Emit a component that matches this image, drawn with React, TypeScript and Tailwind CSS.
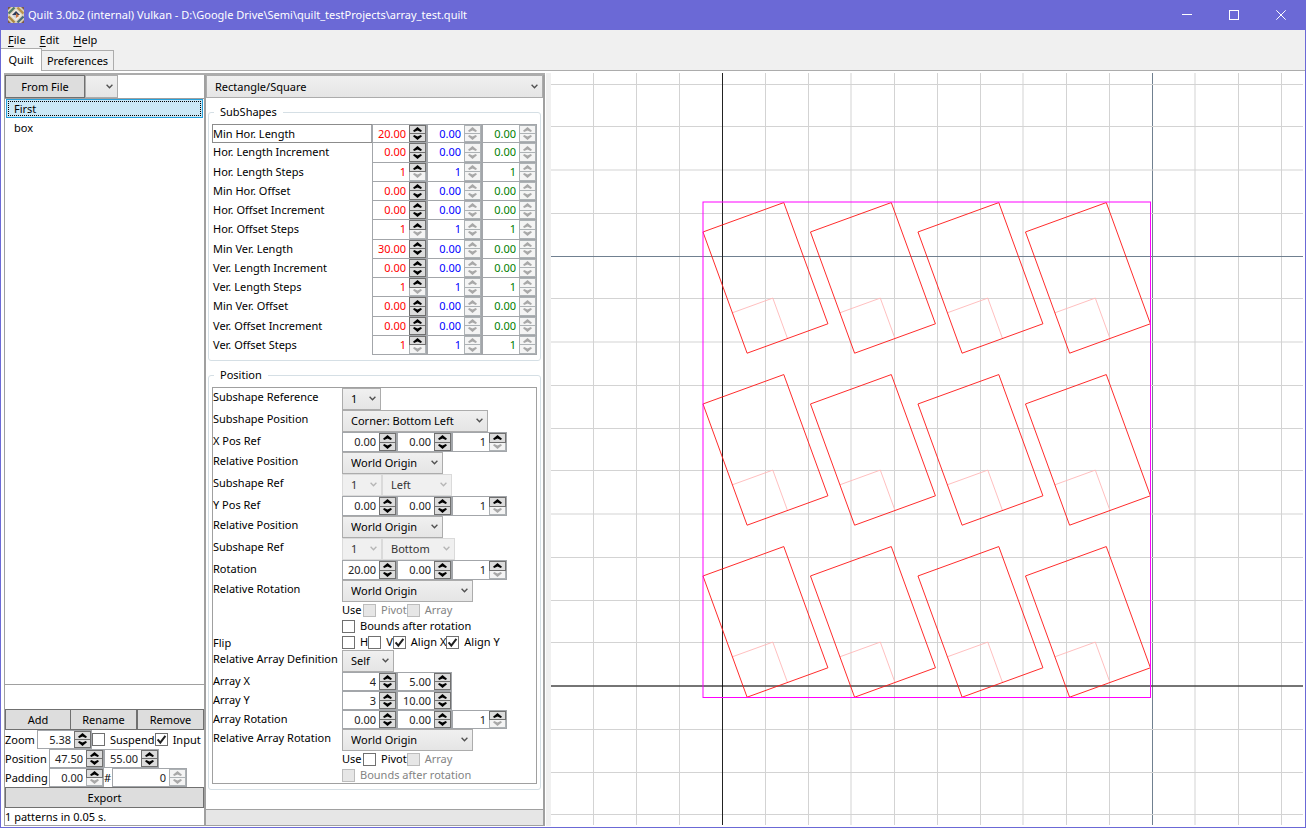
import { useState } from "react";
import type { ReactNode } from "react";

function Caret({ up, dim }: { up?: boolean; dim?: boolean }) {
  return (
    <svg width="9" height="5" viewBox="0 0 9 5" className={dim ? "text-[#a8a8a8]" : "text-black"}>
      <path
        d={up ? "M4.5 0 L9 3.8 L7.8 5 L4.5 3.6 L1.2 5 L0 3.8 Z" : "M4.5 5 L9 1.2 L7.8 0 L4.5 1.4 L1.2 0 L0 1.2 Z"}
        fill="currentColor"
      />
    </svg>
  );
}

type SpinProps = {
  label: string;
  value: number;
  digits?: number;
  min?: number;
  off?: boolean;
  color?: string;
  width?: string;
};

function Spin({ label, value, digits = 2, min, off, color = "text-[#222]", width = "w-[55px]" }: SpinProps) {
  const [n, setN] = useState(value);
  const downOff = off || (min !== undefined && n <= min);
  const live = "bg-[#dcdcdc] border-[#707070]";
  const dim = "bg-[#f4f4f4] border-[#adb2b5]";
  return (
    <span className={`flex h-full shrink-0 border border-[#a3a6aa] bg-white ${width}`}>
      <input
        aria-label={label}
        value={n.toFixed(digits)}
        readOnly
        className={`min-w-0 flex-1 bg-transparent pr-[3px] text-right outline-none ${color}`}
      />
      <span className="flex w-[17px] shrink-0 flex-col">
        <button
          aria-label={`Increase ${label}`}
          disabled={off}
          onClick={() => setN(n + 1)}
          className={`flex min-h-0 flex-1 items-center justify-center border ${off ? dim : live}`}
        >
          <Caret up dim={off} />
        </button>
        <button
          aria-label={`Decrease ${label}`}
          disabled={downOff}
          onClick={() => setN(n - 1)}
          className={`flex min-h-0 flex-1 items-center justify-center border border-t-0 ${downOff ? dim : live}`}
        >
          <Caret dim={downOff} />
        </button>
      </span>
    </span>
  );
}

function Combo({ label, options, width, off }: { label: string; options: string[]; width: string; off?: boolean }) {
  return (
    <span className={`relative flex h-full shrink-0 ${width}`}>
      <select
        aria-label={label}
        disabled={off}
        className={`w-full appearance-none border pl-2 outline-none ${
          off
            ? "border-[#dadada] bg-[#f0f0f0] text-[#333] opacity-100"
            : "border-[#acacac] bg-linear-to-b from-[#f0f0f0] to-[#e5e5e5] text-black"
        }`}
      >
        {options.map((o) => (
          <option key={o}>{o}</option>
        ))}
      </select>
      <svg
        width="7"
        height="5"
        viewBox="0 0 7 5"
        className={`pointer-events-none absolute top-1/2 right-[5px] -mt-[3px] ${off ? "text-[#b5b5b5]" : "text-[#505050]"}`}
      >
        <path d="M0.6 0.8 L3.5 3.8 L6.4 0.8" fill="none" stroke="currentColor" strokeWidth="1.3" />
      </svg>
    </span>
  );
}

function Check({ text, on, off }: { text: string; on?: boolean; off?: boolean }) {
  return (
    <label className={`flex shrink-0 items-center gap-[5px] ${off ? "text-[#838383]" : "text-black"}`}>
      <span className="relative flex size-[13px]">
        <input
          type="checkbox"
          defaultChecked={on}
          disabled={off}
          className={`peer size-[13px] appearance-none border ${
            off ? "border-[#bcbcbc] bg-[#e6e6e6]" : "border-[#707070] bg-white"
          }`}
        />
        <svg
          viewBox="0 0 13 13"
          className="pointer-events-none absolute inset-0 hidden size-[13px] peer-checked:block"
        >
          <path d="M2.6 6.4 L5.3 9.6 L10.4 2.8" fill="none" stroke="#212121" strokeWidth="2" />
        </svg>
      </span>
      {text}
    </label>
  );
}

function Group({ title, children }: { title: string; children: ReactNode }) {
  return (
    <fieldset className="mx-[2px] rounded-[3px] border border-[#d5dfe5] px-[3px] pt-1 pb-[5px]">
      <legend className="ml-[2px] px-[6px]">{title}</legend>
      {children}
    </fieldset>
  );
}

const subShapes: { name: string; first: number; steps?: boolean }[] = [
  { name: "Min Hor. Length", first: 20 },
  { name: "Hor. Length Increment", first: 0 },
  { name: "Hor. Length Steps", first: 1, steps: true },
  { name: "Min Hor. Offset", first: 0 },
  { name: "Hor. Offset Increment", first: 0 },
  { name: "Hor. Offset Steps", first: 1, steps: true },
  { name: "Min Ver. Length", first: 30 },
  { name: "Ver. Length Increment", first: 0 },
  { name: "Ver. Length Steps", first: 1, steps: true },
  { name: "Min Ver. Offset", first: 0 },
  { name: "Ver. Offset Increment", first: 0 },
  { name: "Ver. Offset Steps", first: 1, steps: true },
];

function SubShapeRows() {
  return (
    <div className="grid h-[231px] auto-rows-fr">
      {subShapes.map((r, i) => (
        <div
          key={r.name}
          className={`flex min-h-0 border ${i === 0 ? "border-[#8c8c8c]" : "border-transparent"} -mt-px first:mt-0`}
        >
          <span className={`flex-1 leading-[18px] ${i === 0 ? "border-r border-[#a3a6aa]" : ""}`}>{r.name}</span>
          <div className="-my-px -mr-px flex">
            {["text-[#ff0000]", "text-[#0000ff]", "text-[#008000]"].map((c, j) => (
              <Spin
                key={c}
                label={`${r.name} ${j + 1}`}
                value={j === 0 || r.steps ? r.first : 0}
                digits={r.steps ? 0 : 2}
                min={r.steps ? 1 : undefined}
                off={j > 0}
                color={c}
              />
            ))}
          </div>
        </div>
      ))}
    </div>
  );
}

function Row({ name, height, children }: { name?: string; height: string; children: ReactNode }) {
  return (
    <div className={`flex ${height}`}>
      <span className="w-[129px] shrink-0 leading-[18px] whitespace-nowrap">{name}</span>
      <div className="flex items-center">{children}</div>
    </div>
  );
}

const TALL = "h-[22px]";
const SPIN = "h-5";
const DENSE = "h-[19px]";
const TICK = "h-4";

function PositionRows() {
  return (
    <div className="border border-[#a0a0a0]">
      <Row name="Subshape Reference" height={TALL}>
        <Combo label="Subshape Reference" options={["1"]} width="w-[39px]" />
      </Row>
      <Row name="Subshape Position" height={TALL}>
        <Combo label="Subshape Position" options={["Corner: Bottom Left", "Center"]} width="w-[146px]" />
      </Row>
      <Row name="X Pos Ref" height={SPIN}>
        <Spin label="X Pos Ref" value={0} />
        <Spin label="X Pos Ref increment" value={0} />
        <Spin label="X Pos Ref steps" value={1} digits={0} min={1} />
      </Row>
      <Row name="Relative Position" height={TALL}>
        <Combo label="X Relative Position" options={["World Origin", "Self"]} width="w-[101px]" />
      </Row>
      <Row name="Subshape Ref" height={TALL}>
        <Combo label="X Subshape Ref" options={["1"]} width="w-10" off />
        <Combo label="X Subshape Side" options={["Left"]} width="w-[70px]" off />
      </Row>
      <Row name="Y Pos Ref" height={SPIN}>
        <Spin label="Y Pos Ref" value={0} />
        <Spin label="Y Pos Ref increment" value={0} />
        <Spin label="Y Pos Ref steps" value={1} digits={0} min={1} />
      </Row>
      <Row name="Relative Position" height={TALL}>
        <Combo label="Y Relative Position" options={["World Origin", "Self"]} width="w-[101px]" />
      </Row>
      <Row name="Subshape Ref" height={TALL}>
        <Combo label="Y Subshape Ref" options={["1"]} width="w-10" off />
        <Combo label="Y Subshape Side" options={["Bottom"]} width="w-[73px]" off />
      </Row>
      <Row name="Rotation" height={SPIN}>
        <Spin label="Rotation" value={20} />
        <Spin label="Rotation increment" value={0} />
        <Spin label="Rotation steps" value={1} digits={0} min={1} />
      </Row>
      <Row name="Relative Rotation" height={TALL}>
        <Combo label="Relative Rotation" options={["World Origin", "Self"]} width="w-[131px]" />
      </Row>
      <Row height={TICK}>
        <span className="w-[21px]">Use</span>
        <Check text="Pivot" off />
        <Check text="Array" off />
      </Row>
      <Row height={TICK}>
        <Check text="Bounds after rotation" />
      </Row>
      <Row name="Flip" height={TICK}>
        <Check text="H" />
        <Check text="V" />
        <Check text="Align X" on />
        <Check text="Align Y" on />
      </Row>
      <Row name="Relative Array Definition" height={TALL}>
        <Combo label="Relative Array Definition" options={["Self", "World Origin"]} width="w-[52px]" />
      </Row>
      <Row name="Array X" height={DENSE}>
        <Spin label="Array X count" value={4} digits={0} />
        <Spin label="Array X spacing" value={5} />
      </Row>
      <Row name="Array Y" height={DENSE}>
        <Spin label="Array Y count" value={3} digits={0} />
        <Spin label="Array Y spacing" value={10} />
      </Row>
      <Row name="Array Rotation" height={DENSE}>
        <Spin label="Array Rotation" value={0} />
        <Spin label="Array Rotation increment" value={0} />
        <Spin label="Array Rotation steps" value={1} digits={0} min={1} />
      </Row>
      <Row name="Relative Array Rotation" height={TALL}>
        <Combo label="Relative Array Rotation" options={["World Origin", "Self"]} width="w-[131px]" />
      </Row>
      <Row height={TICK}>
        <span className="w-[21px]">Use</span>
        <Check text="Pivot" />
        <Check text="Array" off />
      </Row>
      <Row height={TICK}>
        <Check text="Bounds after rotation" off />
      </Row>
    </div>
  );
}

const flat = "border border-[#707070] bg-[#dddddd] text-black";

function Sidebar() {
  const [sel, setSel] = useState("First");
  return (
    <aside className="flex w-[200px] shrink-0 flex-col border-l border-[#a0a0a0]">
      <div className="flex h-[23px] items-stretch">
        <button className={`w-20 ${flat}`}>From File</button>
        <Combo label="File source" options={[""]} width="w-[33px]" />
      </div>
      <ul className="flex-1 border-y border-[#a0a0a0] px-px">
        {["First", "box"].map((n) => (
          <li key={n}>
            <button
              onClick={() => setSel(n)}
              className={`block h-[19px] w-full border p-px text-left ${
                sel === n ? "border-[#26a0da] bg-[#cbe8f6]" : "border-transparent"
              }`}
            >
              <span
                className={`block h-[15px] border border-dotted pl-[5px] leading-[13px] ${
                  sel === n ? "border-black" : "border-transparent"
                }`}
              >
                {n}
              </span>
            </button>
          </li>
        ))}
      </ul>
      <div className="h-6" />
      <div className="flex h-[21px]">
        <button className={`w-[66px] ${flat}`}>Add</button>
        <button className={`w-[66px] border-l-0 ${flat}`}>Rename</button>
        <button className={`flex-1 ${flat}`}>Remove</button>
      </div>
      <div className="flex h-[19px] items-center">
        <span className="w-8">Zoom</span>
        <Spin label="Zoom" value={5.38} />
        <Check text="Suspend" />
        <Check text="Input" on />
      </div>
      <div className="flex h-[19px] items-center">
        <span className="w-11">Position</span>
        <Spin label="Position X" value={47.5} />
        <Spin label="Position Y" value={55} />
      </div>
      <div className="flex h-[19px] items-center">
        <span className="w-11">Padding</span>
        <Spin label="Padding" value={0} min={0} />
        <span className="w-2">#</span>
        <Spin label="Padding count" value={0} digits={0} off width="w-[75px]" />
      </div>
      <button className={`h-[21px] ${flat}`}>Export</button>
      <p className="h-[18px] border-b border-[#a0a0a0] leading-[18px]">1 patterns in 0.05 s.</p>
    </aside>
  );
}

const STEP = 43;
const UNIT = 4.3;
const ORIGIN = { x: 171.5, y: 613 };
const range = (from: number, to: number) => Array.from({ length: to - from + 1 }, (_, i) => from + i);

function Canvas() {
  const a = (20 * Math.PI) / 180;
  const ux = UNIT * Math.cos(a);
  const uy = UNIT * Math.sin(a);
  const at = (x: number, y: number) => `${(x * ux - y * uy).toFixed(2)},${(-x * uy - y * ux).toFixed(2)}`;
  const start = { x: 196.1, y: 624.2 };
  return (
    <svg className="min-h-0 w-full flex-1 bg-white" role="img" aria-label="Pattern preview">
      <g strokeWidth="1">
        {range(-3, 60).map((k) => {
          const x = ORIGIN.x + STEP * k - (k % 4 === 3 ? 0.5 : 0);
          return <line key={k} x1={x} x2={x} y1="0" y2="100%" stroke={k === 10 ? "#708090" : "#d3d3d3"} />;
        })}
        {range(-40, 14).map((k) => {
          const m = ((k % 4) + 4) % 4;
          const y = ORIGIN.y - STEP * k + (m === 0 ? 0 : m === 1 ? -0.5 : 0.5);
          return k === 10 ? null : <line key={k} x1="0" x2="100%" y1={y} y2={y} stroke="#d3d3d3" />;
        })}
        <line x1="0" x2="100%" y1="183.5" y2="183.5" stroke="#708090" />
        <line x1={ORIGIN.x} x2={ORIGIN.x} y1="0" y2="100%" stroke="#222222" />
        <line x1="0" x2="100%" y1={ORIGIN.y} y2={ORIGIN.y} stroke="#000000" />
      </g>
      <g fill="none">
        {range(0, 2).map((r) =>
          range(0, 3).map((c) => (
            <g key={`${r}-${c}`} transform={`translate(${start.x + c * 25 * UNIT} ${start.y - r * 40 * UNIT})`}>
              <polyline points={`${at(0, 10)} ${at(10, 10)} ${at(10, 0)}`} stroke="#ffb8b8" strokeWidth="0.9" />
              <polygon points={`${at(0, 0)} ${at(20, 0)} ${at(20, 30)} ${at(0, 30)}`} stroke="#ff1414" strokeWidth="0.9" />
            </g>
          )),
        )}
        <rect x="152" y="129" width="447.5" height="495.5" stroke="#ff00ff" />
      </g>
    </svg>
  );
}

function AppIcon() {
  return (
    <svg width="16" height="16" viewBox="0 0 16 16">
      <rect width="16" height="16" fill="#d8cfb8" />
      <path d="M0 0H3L0 3ZM16 16H13L16 13Z" fill="#7d5a4a" />
      <path d="M16 0V3L13 0ZM0 16V13L3 16Z" fill="#7d5a4a" />
      <path d="M6.5 0.5L0.5 6.5" stroke="#4f7a66" strokeWidth="2.2" />
      <path d="M9.5 0.5L15.5 6.5" stroke="#b9924a" strokeWidth="2.2" />
      <path d="M0.5 9.5L6.5 15.5" stroke="#a8853f" strokeWidth="2.2" />
      <path d="M15.5 9.5L9.5 15.5" stroke="#4a6d78" strokeWidth="2.2" />
      <path d="M8 2L14 8L8 14L2 8Z" fill="#f1ece2" />
      <path d="M8 4L12 8H4Z" fill="#2f3b57" />
      <path d="M4 8H8V12Z" fill="#c9cdd6" />
      <path d="M8 6L11 9L8 11Z" fill="#c8743c" />
    </svg>
  );
}

function TitleBar() {
  return (
    <header className="flex h-[30px] shrink-0 items-center bg-[#6b69d6] pr-px pl-[7px] text-white">
      <AppIcon />
      <h1 className="ml-1 flex-1">Quilt 3.0b2 (internal) Vulkan - D:\Google Drive\Semi\quilt_testProjects\array_test.quilt</h1>
      <button aria-label="Minimize" className="flex h-full w-[46px] items-center justify-center">
        <svg width="10" height="10" stroke="currentColor"><path d="M0 4.5H10" /></svg>
      </button>
      <button aria-label="Maximize" className="flex h-full w-[47px] items-center justify-center">
        <svg width="10" height="10" stroke="currentColor" fill="none"><rect x="0.5" y="0.5" width="9" height="9" /></svg>
      </button>
      <button aria-label="Close" className="flex h-full w-[47px] items-center justify-center">
        <svg width="10" height="10" stroke="currentColor"><path d="M0.3 0.3L9.7 9.7M9.7 0.3L0.3 9.7" /></svg>
      </button>
    </header>
  );
}

export default function App() {
  return (
    <div className="flex min-h-screen flex-col border-x border-b border-[#6b69d6] bg-[#f0f0f0] font-['Noto_Sans','Open_Sans',sans-serif] text-[11px] leading-4 text-black">
      <TitleBar />
      <nav className="flex h-[18px] items-center gap-[14px] pt-[2px] pl-[7px]">
        {["File", "Edit", "Help"].map((m) => (
          <button key={m}>
            <span className="underline underline-offset-2">{m[0]}</span>
            {m.slice(1)}
          </button>
        ))}
      </nav>
      <div role="tablist" className="flex h-[22px] items-end">
        <button role="tab" aria-selected="true" className="relative -mb-px h-[23px] w-[41px] border-t border-r border-[#acacac] bg-white">
          Quilt
        </button>
        <button role="tab" aria-selected="false" className="h-5 w-[72px] border border-b-0 border-l-0 border-[#acacac]">
          Preferences
        </button>
      </div>
      <main className="flex flex-1 border-t border-[#acacac] bg-white pt-[2px] pb-[1px]">
        <div className="ml-[3px] flex w-[541px] shrink-0 border-t-2 border-[#acacac]">
          <Sidebar />
          <section className="flex min-w-0 flex-1 flex-col border-x-2 border-[#a0a0a0]">
            <div className="flex h-[23px]">
              <Combo label="Shape type" options={["Rectangle/Square", "Ellipse/Circle"]} width="w-full" />
            </div>
            <div className="h-[6px]" />
            <Group title="SubShapes">
              <SubShapeRows />
            </Group>
            <div className="h-[6px]" />
            <Group title="Position">
              <PositionRows />
            </Group>
            <div className="flex-1" />
            <div className="h-[17px] border-y border-[#a0a0a0] bg-[#e6e6e6]" />
          </section>
        </div>
        <div className="ml-px w-[5px] shrink-0 bg-[#f0f0f0]" />
        <div className="flex min-w-0 flex-1 pr-[2px] pb-[1px]">
          <div className="flex min-w-0 flex-1 flex-col">
            <Canvas />
          </div>
        </div>
      </main>
    </div>
  );
}
